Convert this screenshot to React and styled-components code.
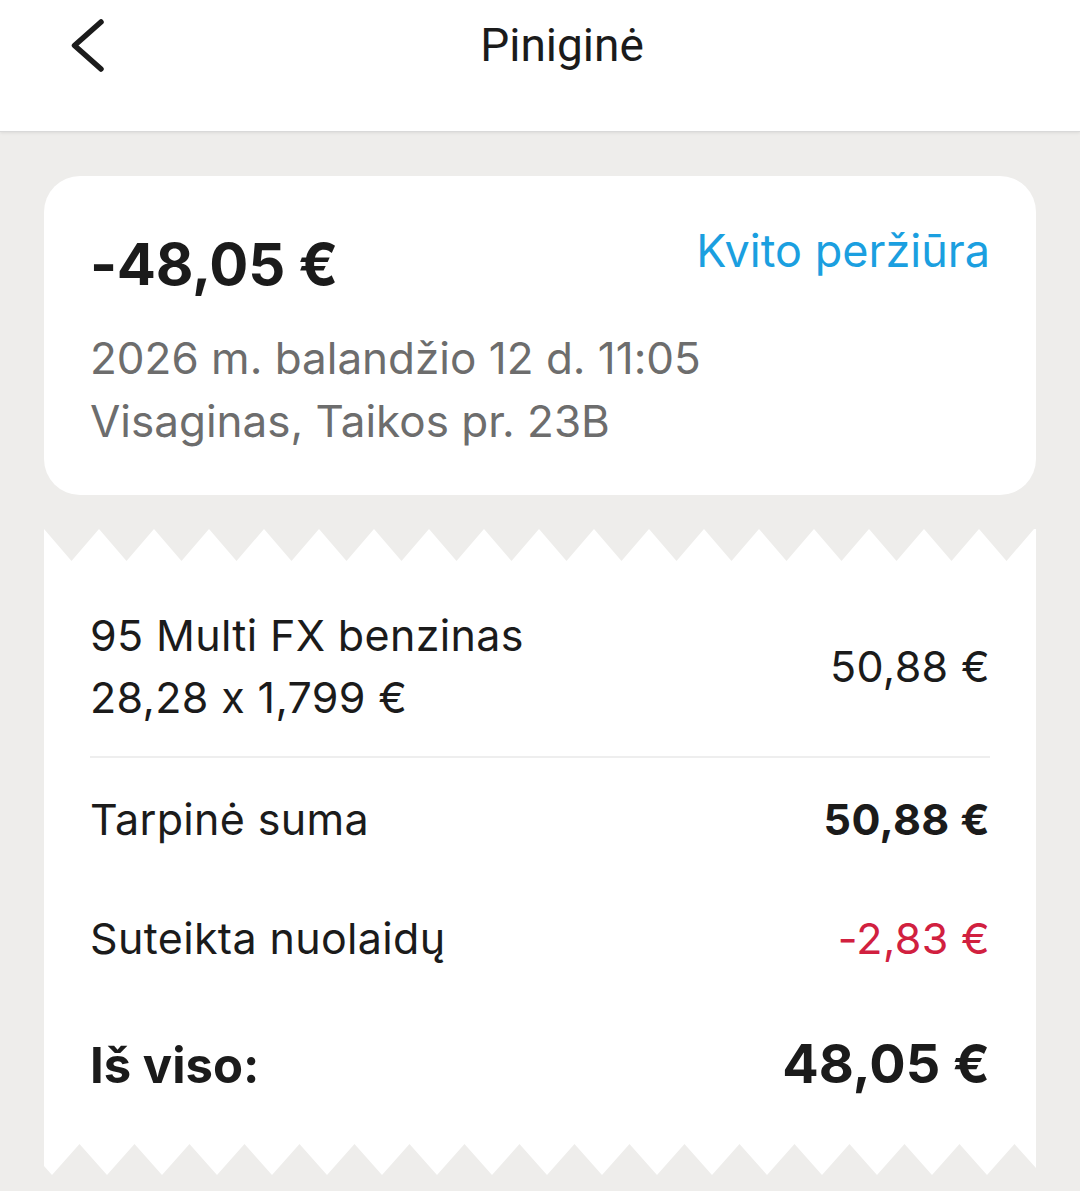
import React from "react";
import styled, { createGlobalStyle } from "styled-components";

const GlobalStyle = createGlobalStyle`
  html, body {
    margin: 0;
    padding: 0;
    background: #eeedeb;
  }
  body {
    font-family: Inter, "Noto Sans", sans-serif;
    font-feature-settings: "calt" 0;
    color: #1b1b1b;
  }
`;

const Page = styled.div`
  width: 1080px;
  min-height: 1191px;
  background: #eeedeb;
  overflow: hidden;
`;

const Header = styled.header`
  display: grid;
  grid-template-columns: 132px 1fr 88px;
  height: 131px;
  background: #fff;
  border-bottom: 1px solid #d9d9d9;
  box-shadow: 0 1px 3px rgba(0, 0, 0, 0.08);
`;

const BackButton = styled.button`
  all: unset;
  cursor: pointer;
  padding: 16px 0 0 66px;
  align-self: start;
`;

const Title = styled.h1`
  margin: 22px 0 0;
  font-family: Roboto, "Liberation Sans", sans-serif;
  font-weight: 400;
  font-size: 46px;
  line-height: 46px;
  text-align: center;
  color: #1b1b1b;
`;

const Content = styled.main`
  padding: 44px 44px 0;
  display: flex;
  flex-direction: column;
`;

const SummaryCard = styled.section`
  background: #fff;
  border-radius: 36px;
  padding: 53px 46px 42px;
`;

const TopRow = styled.div`
  display: flex;
  justify-content: space-between;
  align-items: flex-start;
`;

const Amount = styled.div`
  font-size: 58px;
  line-height: 70px;
  font-weight: 700;
  letter-spacing: -0.3px;
`;

const Link = styled.a`
  font-size: 45px;
  line-height: 44px;
  color: #1b9fe0;
  text-decoration: none;
`;

const Meta = styled.div`
  margin-top: 28px;
  font-size: 44px;
  line-height: 63px;
  color: #6d6d6d;
`;

const Receipt = styled.section`
  margin-top: 34px;
  display: flex;
  flex-direction: column;
`;

const Edge = styled.svg`
  display: block;
  width: 100%;
  height: ${(p) => p.$h}px;
`;

const ReceiptBody = styled.div`
  background: #fff;
  padding: 43px 46px 43px;
`;

const ItemRow = styled.div`
  display: flex;
  justify-content: space-between;
  align-items: center;
  padding-bottom: 28px;
  border-bottom: 2px solid #eeeeee;
  margin-bottom: 30px;
`;

const Text = styled.div`
  font-size: 43px;
  line-height: 62px;
  letter-spacing: 0.35px;
  font-weight: ${(p) => (p.$bold ? 700 : 400)};
  color: ${(p) => p.$color || "#1b1b1b"};
`;

const Row = styled.div`
  display: flex;
  justify-content: space-between;
  align-items: baseline;
  margin-top: ${(p) => p.$gap || 0}px;
`;

const TotalLabel = styled.div`
  font-size: 49px;
  line-height: 70px;
  font-weight: 700;
`;

const TotalValue = styled.div`
  font-size: 54px;
  line-height: 70px;
  font-weight: 700;
`;

function topEdge() {
  const pts = ["0,0"];
  for (let k = 0; k < 18; k++) {
    pts.push(`${27.5 + 55 * k},32`, `${55 + 55 * k},0`);
  }
  pts.push("992,0", "992,32", "0,32");
  return pts.join(" ");
}

function bottomEdge() {
  const pts = ["0,0", "0,22"];
  for (let k = 0; k < 18; k++) {
    pts.push(`${8 + 55 * k},31`, `${35.5 + 55 * k},0`);
  }
  pts.push("992,24", "992,0");
  return pts.join(" ");
}

export default function App() {
  return (
    <Page>
      <GlobalStyle />
      <Header>
        <BackButton aria-label="Atgal">
          <svg width="44" height="60" viewBox="0 0 44 60">
            <path
              d="M35 6 L8.5 29.5 L35 53"
              fill="none"
              stroke="#1b1b1b"
              strokeWidth="5.5"
              strokeLinecap="round"
              strokeLinejoin="round"
            />
          </svg>
        </BackButton>
        <Title>Piniginė</Title>
        <div />
      </Header>

      <Content>
        <SummaryCard>
          <TopRow>
            <Amount>-48,05 €</Amount>
            <Link href="#">Kvito peržiūra</Link>
          </TopRow>
          <Meta>
            2026 m. balandžio 12 d. 11:05
            <br />
            Visaginas, Taikos pr. 23B
          </Meta>
        </SummaryCard>

        <Receipt>
          <Edge $h={32} viewBox="0 0 992 32" preserveAspectRatio="none">
            <polygon points={topEdge()} fill="#fff" />
          </Edge>
          <ReceiptBody>
            <ItemRow>
              <div>
                <Text>95 Multi FX benzinas</Text>
                <Text>28,28 x 1,799 €</Text>
              </div>
              <Text>50,88 €</Text>
            </ItemRow>
            <Row>
              <Text>Tarpinė suma</Text>
              <Text $bold>50,88 €</Text>
            </Row>
            <Row $gap={57}>
              <Text>Suteikta nuolaidų</Text>
              <Text $color="#d1203f">-2,83 €</Text>
            </Row>
            <Row $gap={60}>
              <TotalLabel>Iš viso:</TotalLabel>
              <TotalValue>48,05 €</TotalValue>
            </Row>
          </ReceiptBody>
          <Edge $h={31} viewBox="0 0 992 31" preserveAspectRatio="none">
            <polygon points={bottomEdge()} fill="#fff" />
          </Edge>
        </Receipt>
      </Content>
    </Page>
  );
}
